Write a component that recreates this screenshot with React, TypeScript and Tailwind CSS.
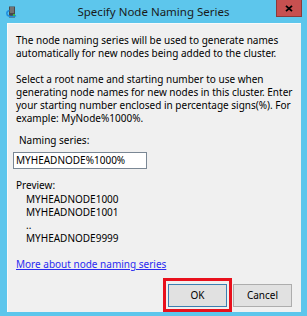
import React from "react";

const ServerIcon = () => (
  <svg width="12" height="13" viewBox="0 0 12 13">
    <rect x="3" y="0.5" width="6" height="11" fill="#4a4a4a" />
    <rect x="4" y="1.5" width="4" height="1" fill="#9a9a9a" />
    <rect x="4" y="3.5" width="4" height="1" fill="#9a9a9a" />
    <rect x="4" y="5.5" width="4" height="1" fill="#9a9a9a" />
    <path d="M3.5 4.5 C0 5.5 0 9 3 10 C5 10.8 8 10.5 10 9.5" fill="none" stroke="#1e8fe0" strokeWidth="1.6" />
    <rect x="7" y="8" width="2" height="2" fill="#3cb44a" />
  </svg>
);

export default function App() {
  const font = "font-['Noto_Sans','Liberation_Sans',sans-serif]";
  return (
    <div className={`w-[307px] h-[316px] bg-[#5dc6ec] flex flex-col overflow-hidden ${font} text-black`}>
      {/* Title bar */}
      <div className="h-[23px] flex items-start relative shrink-0">
        <div className="pl-[6px] pt-[6px]">
          <ServerIcon />
        </div>
        <div className="absolute left-0 right-0 top-[3px] text-center text-[11.5px] leading-[18px] text-[#1a1a1a]">
          Specify Node Naming Series
        </div>
        <div className="ml-auto mr-[5px] w-[26px] h-[17px] bg-[#c75050] border border-t-0 border-[#8a3a3a] flex items-center justify-center relative">
          <svg width="8" height="7" viewBox="0 0 8 7">
            <path d="M1 0.8 L7 6.2 M7 0.8 L1 6.2" stroke="#000" strokeWidth="1.8" />
          </svg>
        </div>
      </div>

      {/* Client area */}
      <div className="flex-1 ml-[7px] mr-[6px] mb-[4px] bg-[#f0f0f0] border-l border-t border-[#fafafa] pl-[8px] pr-[8px] pt-[10px] text-[10px] leading-[13px]">
        <div className="whitespace-nowrap">
          <div>The node naming series will be used to generate names</div>
          <div>automatically for new nodes being added to the cluster.</div>
        </div>
        <div className="mt-[13px] whitespace-nowrap">
          <div>Select a root name and starting number to use when</div>
          <div>generating node names for new nodes in this cluster. Enter</div>
          <div>your starting number enclosed in percentage signs(%). For</div>
          <div>example: MyNode%1000%.</div>
        </div>

        <div className="mt-[9px] pl-[3px]">Naming series:</div>
        <div className="mt-[5px] -ml-[3px] w-[134px] h-[17px] bg-white border border-[#7a8794] pl-[2px] leading-[15px]">
          MYHEADNODE%1000%
        </div>

        <div className="mt-[10px]">Preview:</div>
        <div className="pl-[10px] mt-[1px]">
          <div>MYHEADNODE1000</div>
          <div>MYHEADNODE1001</div>
          <div>..</div>
          <div>MYHEADNODE9999</div>
        </div>

        <div className="mt-[13px]">
          <a className="text-[#2a2af0] underline cursor-pointer">More about node naming series</a>
        </div>

        <div className="mt-[13px] flex justify-end gap-[6px] pr-[1px]">
          <div className="relative">
            <button className="w-[59px] h-[23px] bg-[#e1e1e1] border border-[#3c7fb1] text-[10px]">
              OK
            </button>
            <div className="absolute -left-[5px] -top-[6px] -right-[5px] -bottom-[5px] border-[3px] border-[#e8101c]" />
          </div>
          <button className="w-[59px] h-[23px] bg-[#e1e1e1] border border-[#adadad] text-[10px]">
            Cancel
          </button>
        </div>
      </div>
    </div>
  );
}
